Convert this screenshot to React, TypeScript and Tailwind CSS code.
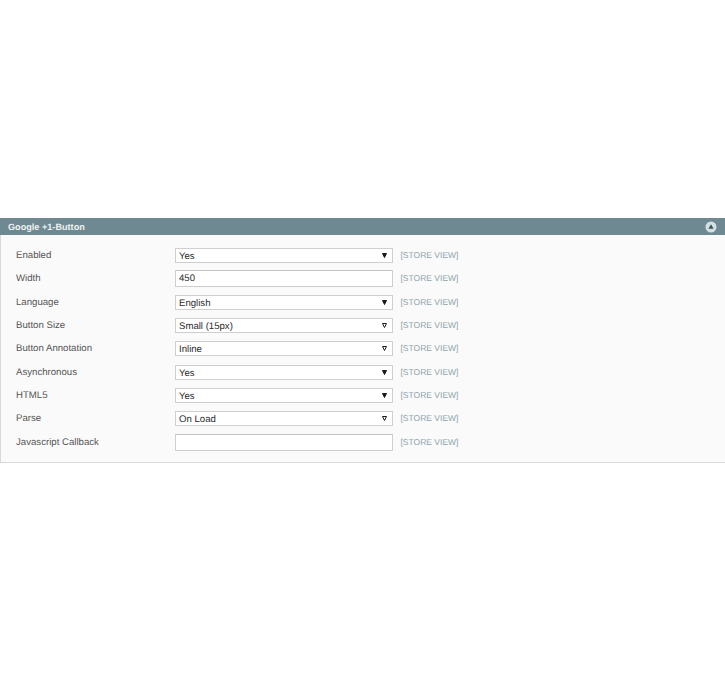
const rows = [
  { label: "Enabled", value: "Yes", kind: "select" },
  { label: "Width", value: "450", kind: "input" },
  { label: "Language", value: "English", kind: "select" },
  { label: "Button Size", value: "Small (15px)", kind: "open" },
  { label: "Button Annotation", value: "Inline", kind: "open" },
  { label: "Asynchronous", value: "Yes", kind: "select" },
  { label: "HTML5", value: "Yes", kind: "select" },
  { label: "Parse", value: "On Load", kind: "open" },
  { label: "Javascript Callback", value: "", kind: "input" },
];

const Arrow = ({ hollow }: { hollow: boolean }) => (
  <svg width="5" height="5" viewBox="0 0 5 5" className="absolute right-[5px] top-[4px]">
    <path d="M0.5 0.5H4.5L2.5 4.5Z" fill={hollow ? "#ffffff" : "#1a1a1a"} stroke="#1a1a1a" strokeWidth="1" />
  </svg>
);

const Row = ({ label, value, kind }: { label: string; value: string; kind: string }) => (
  <div className="flex h-[23.35px] items-start">
    <div className="w-[159px] pt-[1px] text-[9.65px] leading-[13px] text-[#555555]">{label}</div>
    {kind === "input" ? (
      <div className="h-[17px] w-[218px] -translate-y-[1px] border border-[#cfcfcf] border-t-[#c4c4c4] bg-white pl-[3px] text-[9.6px] leading-[16px] text-[#2b2b2b]">
        {value}
      </div>
    ) : (
      <div className="relative h-[15px] w-[218px] border border-[#cfcfcf] bg-white pl-[3px] text-[9.6px] leading-[15px] text-[#2b2b2b]">
        {value}
        <Arrow hollow={kind === "open"} />
      </div>
    )}
    <div className="ml-[7.5px] pt-[1px] text-[8.5px] leading-[13px] text-[#8ea4ab]">[STORE VIEW]</div>
  </div>
);

export default function App() {
  return (
    <div className="h-[680px] w-[725px] overflow-hidden bg-white pt-[218px] font-['Liberation_Sans',Arial,sans-serif] [text-rendering:geometricPrecision]">
      <div className="flex h-[17px] items-center justify-between bg-[#6f8992] pl-[8px] pr-[8px]">
        <span className="pt-[1px] text-[9.15px] font-bold leading-[16px] text-[#eef2f3]">Google +1-Button</span>
        <svg width="12" height="12" viewBox="0 0 12 12">
          <circle cx="6" cy="6" r="5.5" fill="#d5dfe2" />
          <path d="M6 3.2L8.6 7.8H3.4Z" fill="#2f5663" />
        </svg>
      </div>
      <div className="h-[228px] border-b border-l border-[#d9d9d9] bg-[#fafafa] pl-[15px] pt-[13px]">
        {rows.map((row) => (
          <Row key={row.label} label={row.label} value={row.value} kind={row.kind} />
        ))}
      </div>
    </div>
  );
}
